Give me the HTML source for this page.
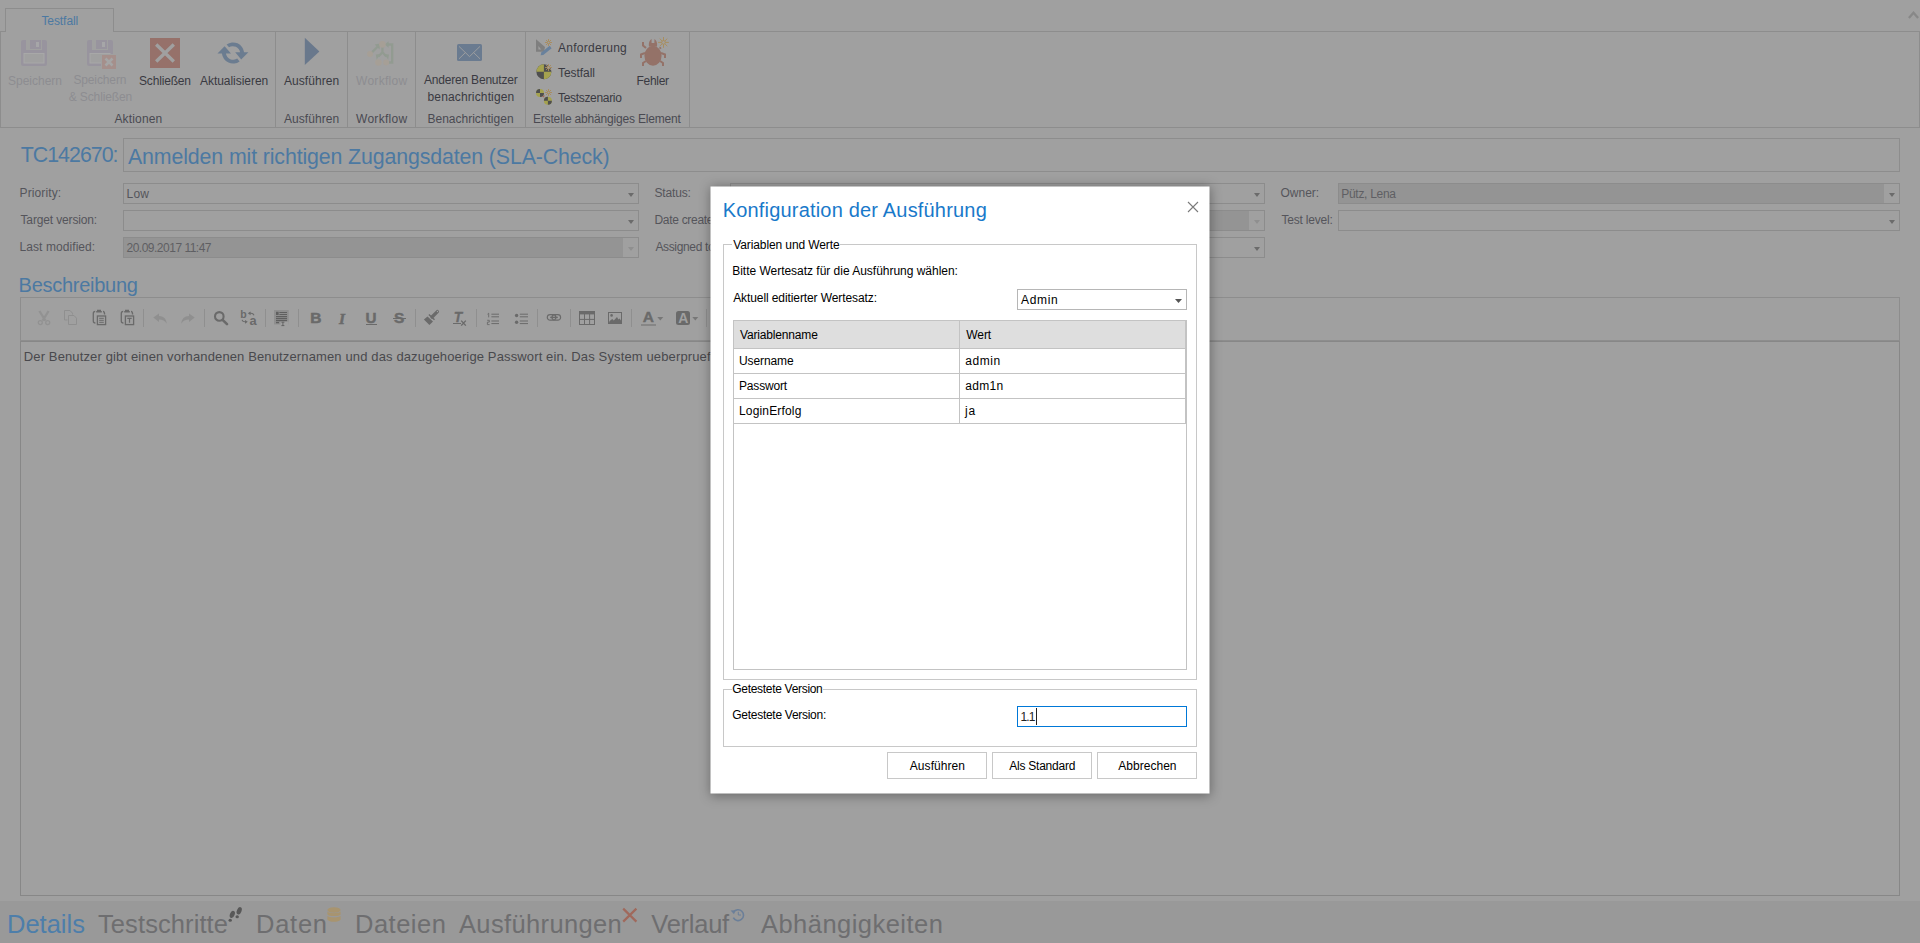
<!DOCTYPE html>
<html lang="de"><head><meta charset="utf-8"><title>Testfall TC142670</title>
<style>
html,body{margin:0;padding:0}
body{width:1920px;height:943px;overflow:hidden;position:relative;background:#a0a0a0;font-family:"Liberation Sans",sans-serif}
.t{position:absolute;white-space:nowrap}
.a{position:absolute;box-sizing:border-box}
.bd{border:1px solid #8d8d8d}
.sep{position:absolute;top:32px;width:1px;height:95px;background:#8d8d8d}
.cb{position:absolute;box-sizing:border-box;height:21px;border:1px solid #8c8c8c}
.cb i{position:absolute;right:4px;top:9px;width:0;height:0;border-left:3.5px solid transparent;border-right:3.5px solid transparent;border-top:4px solid #6b6b6b}
.cb.ro i{border-top-color:#8f8f8f}
.cb.ro b{position:absolute;left:0;top:0;bottom:0;right:15px;background:#949494}
.ts{position:absolute;top:309px;width:1px;height:18px;background:#8f8f8f}
svg{position:absolute;overflow:visible}
#dlg{position:absolute;left:710px;top:186px;width:499px;height:607px;background:#fff;transform:translate(.5px,.5px);box-shadow:0 1.5px 11px 1px rgba(0,0,0,.34)}
.gb{position:absolute;box-sizing:border-box;border:1px solid #c8c8c8}
.lg{position:absolute;background:#fff;height:3px}
.btn{position:absolute;box-sizing:border-box;width:100px;height:27px;top:752px;border:1px solid #c8c8c8;background:#fff}
.hl{position:absolute;height:1px;background:#c3c3c3}
.vl{position:absolute;width:1px;background:#c3c3c3}
</style></head><body>
<!-- ribbon -->
<div class="a bd" style="left:0;top:31px;width:1920px;height:97px"></div>
<div class="a bd" style="left:5px;top:8px;width:109px;height:24px;border-bottom:0;background:#a0a0a0"></div>
<div class="sep" style="left:275px"></div><div class="sep" style="left:347px"></div><div class="sep" style="left:415px"></div><div class="sep" style="left:525px"></div><div class="sep" style="left:689px"></div>
<svg style="left:1908px;top:10px" width="11" height="10" viewBox="0 0 11 10"><path d="M0.9 8 L5.5 2.8 L10.1 8" fill="none" stroke="#888" stroke-width="2.3"/></svg>
<!-- save (disabled) -->
<svg style="left:21px;top:40px" width="26" height="26" viewBox="0 0 26 26"><rect x="0" y="0" width="26" height="26" rx="2" fill="#98949e"/><rect x="5" y="0" width="16" height="10" fill="#a0a0a0"/><rect x="9" y="0" width="11" height="9" fill="#98949e"/><rect x="15" y="2" width="3" height="5" fill="#a6a6a8"/><rect x="3" y="13.5" width="20" height="9.5" fill="#a0a0a0" stroke="#a8a8a8" stroke-width="1"/></svg>
<!-- save & close (disabled) -->
<svg style="left:87px;top:40px" width="30" height="30" viewBox="0 0 30 30"><rect x="0" y="0" width="26" height="26" rx="2" fill="#98949e"/><rect x="5" y="0" width="16" height="10" fill="#a0a0a0"/><rect x="9" y="0" width="11" height="9" fill="#98949e"/><rect x="15" y="2" width="3" height="5" fill="#a6a6a8"/><rect x="3" y="13.5" width="20" height="9.5" fill="#a0a0a0" stroke="#a8a8a8" stroke-width="1"/><rect x="14" y="14" width="16" height="16" fill="#a0a0a0"/><rect x="15" y="15" width="14" height="14" fill="#a58f8b"/><path d="M18.5 18.5 L25.5 25.5 M25.5 18.5 L18.5 25.5" stroke="#a5a5a5" stroke-width="2.6"/></svg>
<!-- close -->
<svg style="left:150px;top:38px" width="30" height="30" viewBox="0 0 30 30"><rect width="30" height="30" fill="#96716a"/><path d="M6.2 6.5 L23.8 23.5 M23.8 6.5 L6.2 23.5" stroke="#a0a0a0" stroke-width="3.4"/></svg>
<!-- refresh -->
<svg style="left:217px;top:41px" width="32" height="24" viewBox="0 0 32 24"><g fill="#6b7c90"><path d="M7.6 5.2 L0.5 12.6 L4.9 12.6 A11.2 11.2 0 0 0 22.6 20.4 L20.2 17.6 A7.4 7.4 0 0 1 8.9 12.6 L14 12.6 Z"/><path d="M24.2 18.4 L31.4 11.2 L27.1 11.2 A11.2 11.2 0 0 0 9.6 3.4 L12 6.2 A7.4 7.4 0 0 1 23.1 11.2 L18.2 11.2 Z"/></g></svg>
<!-- play -->
<svg style="left:304px;top:37px" width="16" height="29" viewBox="0 0 16 29"><path d="M0.8 0.8 L15.4 14.4 L0.8 28 Z" fill="#69788c"/></svg>
<!-- workflow (disabled) -->
<svg style="left:366px;top:40px" width="29" height="27" viewBox="0 0 29 27"><g fill="none" stroke="#929b91" stroke-width="2.3"><path d="M6 12.4 L11.6 6.8"/><path d="M16.4 7 V12.6 M16.4 12.2 L12.4 16.6 M16.4 12.2 L20.4 16.6"/><path d="M22.500 22.500 H26.200 V4.500 H22"/></g><g fill="#929b91"><path d="M14.200 3.600 L13.600 9.400 L8.800 4.600 Z"/><path d="M22.600 1.200 V7.800 L18.800 4.500 Z"/><path d="M9.800 14.600 L14.600 14 L10.600 19.800 Z"/><path d="M23 14.600 L18.200 14 L22.200 19.800 Z"/></g><g fill="#a69f96"><circle cx="16.400" cy="4.400" r="3.300"/><circle cx="4" cy="14" r="3"/><circle cx="12.400" cy="22.500" r="3.300"/><circle cx="20.200" cy="22.500" r="3"/></g></svg>
<!-- mail -->
<svg style="left:457px;top:44px" width="25" height="17" viewBox="0 0 25 17"><rect width="25" height="17" rx="1.6" fill="#6a7b90"/><path d="M2 2.4 L12.5 12.6 L23 2.4 M2 14.8 L8.4 8.6 M23 14.8 L16.6 8.6" fill="none" stroke="#a0a0a0" stroke-width="0.9"/></svg>
<!-- anforderung -->
<svg style="left:535px;top:38px" width="18" height="18" viewBox="0 0 18 18"><path d="M1 1.2 V13.8 H9 L10 9 Z M3.4 8 L6.2 11.6 H3.4 Z" fill="#7f7f7f" fill-rule="evenodd"/><path d="M6.3 14.6 L14.6 7.8 L16.6 10.2 L8.3 17 L5.6 17.2 Z" fill="#69819c"/><g stroke="#a98b5a" stroke-width="0.9" fill="none"><path d="M13.5 1 V8 M10 4.5 H17 M11 2 L16 7 M16 2 L11 7"/><circle cx="13.5" cy="4.5" r="1.3" fill="#a0a0a0"/></g></svg>
<!-- testfall -->
<svg style="left:535px;top:63px" width="18" height="18" viewBox="0 0 18 18"><circle cx="8.9" cy="8.8" r="7.5" fill="#4f4f4f"/><path d="M8.9 8.8 V1.3 A7.5 7.5 0 0 0 1.4 8.8 Z M8.9 8.8 V16.3 A7.5 7.5 0 0 0 16.4 8.8 Z" fill="#a5a24f"/><g stroke="#a98b5a" stroke-width="0.9" fill="none"><path d="M13.5 1 V8 M10 4.5 H17 M11 2 L16 7 M16 2 L11 7"/><circle cx="13.5" cy="4.5" r="1.3" fill="#a0a0a0"/></g></svg>
<!-- testszenario -->
<svg style="left:535px;top:88px" width="18" height="18" viewBox="0 0 18 18"><circle cx="5" cy="4.9" r="4" fill="#a5a24f"/><path d="M5 4.9 V0.9 A4 4 0 0 0 1 4.9 Z M5 4.9 V8.9 A4 4 0 0 0 9 4.9 Z" fill="#4f4f4f"/><circle cx="12.9" cy="12.8" r="4" fill="#a5a24f"/><path d="M12.9 12.8 V8.8 A4 4 0 0 0 8.9 12.8 Z M12.9 12.8 V16.8 A4 4 0 0 0 16.9 12.8 Z" fill="#4f4f4f"/><path d="M7 8.6 L9.6 7 L9 9.6 Z" fill="#a0655a"/><g stroke="#a98b5a" stroke-width="0.9" fill="none"><path d="M13.5 1 V8 M10 4.5 H17 M11 2 L16 7 M16 2 L11 7"/><circle cx="13.5" cy="4.5" r="1.3" fill="#a0a0a0"/></g></svg>
<!-- bug -->
<svg style="left:639px;top:36px" width="32" height="32" viewBox="0 0 32 32"><g fill="#947268"><ellipse cx="14" cy="19.8" rx="8.6" ry="10"/><path d="M10 10.5 C9.4 6.5 11 3.8 12.6 3 V7 H15.4 V3 C17 3.800 18.600 6.500 18 10.500 Z"/></g><g fill="none" stroke="#947268" stroke-width="2"><path d="M7 12 L4 9.500 V6"/><path d="M20.5 12.5 L22 11.500"/><path d="M6 17 L2 18.500 V22"/><path d="M22 17 L26 18.500 V22"/><path d="M7 25 L4 27 V30"/><path d="M21 25 L24 27 V30"/></g><g stroke="#a98c58" stroke-width="0.9" fill="none"><path d="M24.500 1 V11.800 M19.100 6.400 H29.900 M20.700 2.600 L28.300 10.200 M28.300 2.600 L20.700 10.200"/><circle cx="24.500" cy="6.400" r="1.800" fill="#a0a0a0"/></g></svg>

<!-- form -->
<div class="a bd" style="left:123px;top:138px;width:1777px;height:34px"></div>
<div class="cb" style="left:123px;top:183px;width:516px"><i></i></div>
<div class="cb" style="left:123px;top:210px;width:516px"><i></i></div>
<div class="cb ro" style="left:123px;top:237px;width:516px"><b></b><i></i></div>
<div class="cb" style="left:730px;top:183px;width:535px"><i></i></div>
<div class="cb ro" style="left:730px;top:210px;width:535px"><b></b><i></i></div>
<div class="cb" style="left:730px;top:237px;width:535px"><i></i></div>
<div class="cb ro" style="left:1338px;top:183px;width:562px"><b></b><i style="border-top-color:#6b6b6b"></i></div>
<div class="cb" style="left:1338px;top:210px;width:562px"><i></i></div>
<!-- editor -->
<div class="a bd" style="left:20px;top:297px;width:1880px;height:44px"></div>
<div class="a" style="left:20px;top:341px;width:1880px;height:555px;border:1px solid #878787"></div>
<div class="ts" style="left:143px"></div><div class="ts" style="left:204px"></div><div class="ts" style="left:265px"></div><div class="ts" style="left:298px"></div><div class="ts" style="left:415px"></div><div class="ts" style="left:476px"></div><div class="ts" style="left:537px"></div><div class="ts" style="left:570px"></div><div class="ts" style="left:631px"></div><div class="ts" style="left:706px"></div>
<!-- cut -->
<svg style="left:37px;top:310px" width="14" height="16" viewBox="0 0 14 16"><g fill="none" stroke="#929292"><path d="M2.4 1 L8.4 10.6 M11.600 1 L5.600 10.600" stroke-width="2.3"/><circle cx="3.300" cy="12.600" r="2" stroke-width="1.300"/><circle cx="10.700" cy="12.600" r="2" stroke-width="1.300"/></g></svg>
<!-- copy -->
<svg style="left:64px;top:310px" width="14" height="16" viewBox="0 0 14 16"><g fill="none" stroke="#8f8f8f" stroke-width="1"><path d="M3.500 10 H0.500 V0.500 H6 L8.500 3.200 V4.500"/><path d="M4.500 5.500 H10 L12.500 8.200 V14.500 H4.500 Z" fill="#a0a0a0"/></g></svg>
<!-- paste -->
<svg style="left:92px;top:309px" width="15" height="17" viewBox="0 0 15 17"><g fill="none" stroke="#6a6a6a"><path d="M3.200 2.300 C1.500 2.300 1.300 3 1.300 4.500 V12 C1.300 13.700 1.800 14 3.400 14" stroke-width="1.300"/><path d="M11 2.300 C12.300 2.300 12.600 3 12.600 5.500" stroke-width="1.300"/><path d="M4.200 2.700 H9.800 M5 1.400 H9" stroke-width="1.500"/><rect x="5.400" y="7" width="8.200" height="8.600" stroke-width="1.300"/><path d="M7.200 9.300 H11.800 M7.200 11.300 H11.800 M7.200 13.300 H11.800" stroke-width="1"/></g></svg>
<!-- paste text -->
<svg style="left:120px;top:309px" width="15" height="17" viewBox="0 0 15 17"><g fill="none" stroke="#6a6a6a"><path d="M3.200 2.300 C1.500 2.300 1.300 3 1.300 4.500 V12 C1.300 13.700 1.800 14 3.400 14" stroke-width="1.300"/><path d="M11 2.300 C12.300 2.300 12.600 3 12.600 5.500" stroke-width="1.300"/><path d="M4.200 2.700 H9.800 M5 1.400 H9" stroke-width="1.500"/><rect x="5.400" y="7" width="8.200" height="8.600" stroke-width="1.300"/><path d="M7.300 9.300 H11.700 M9.500 9.300 V13.800" stroke-width="1.200"/></g></svg>
<!-- undo / redo -->
<svg style="left:153px;top:313px" width="14" height="12" viewBox="0 0 14 12"><path d="M0.300 4.600 L6 0.600 V3 C10.500 3 13.500 6 13.700 10.800 C12 7.800 9.500 6.600 6 6.600 V9 Z" fill="#8f8f8f"/></svg>
<svg style="left:181px;top:313px" width="14" height="12" viewBox="0 0 14 12"><path d="M13.700 4.600 L8 0.600 V3 C3.500 3 0.500 6 0.300 10.800 C2 7.800 4.500 6.600 8 6.600 V9 Z" fill="#8f8f8f"/></svg>
<!-- search -->
<svg style="left:213px;top:310px" width="16" height="16" viewBox="0 0 16 16"><circle cx="6.300" cy="6.400" r="4.300" fill="none" stroke="#6a6a6a" stroke-width="2.100"/><path d="M9.600 9.800 L14 14.200" stroke="#6a6a6a" stroke-width="2.600" stroke-linecap="round"/></svg>
<!-- replace -->
<span class="t" style="left:240.3px;top:308.4px;font-size:10.5px;line-height:12px;font-weight:bold;color:#6a6a6a">b</span>
<span class="t" style="left:249.6px;top:313.4px;font-size:12.8px;line-height:16px;font-weight:bold;color:#6a6a6a">a</span>
<svg style="left:240px;top:310px" width="17" height="16" viewBox="0 0 17 16"><g fill="none" stroke="#6a6a6a" stroke-width="1.100"><path d="M9 3.300 H11 C12.500 3.300 13.500 4 14 5.200"/><path d="M2 9.800 C2.500 11.400 3.500 11.800 5 11.800 H6"/></g><path d="M10.600 1.400 L7.800 3.300 L10.600 5.200 Z M5 9.900 L7.800 11.800 L5 13.700 Z" fill="#6a6a6a"/></svg>
<!-- select all -->
<svg style="left:274px;top:310px" width="15" height="16" viewBox="0 0 15 16"><rect x="0" y="0" width="14.700" height="14.500" fill="#8f8f8f"/><g stroke="#5f5f5f" stroke-width="1.100"><path d="M5.400 2.500 H13 M5.400 4.500 H13 M2 6.600 H13 M2 8.600 H13 M2 10.600 H13 M2 12.600 H5"/></g><rect x="2" y="1.800" width="2.600" height="3.200" fill="#5f5f5f"/><rect x="6.400" y="11.600" width="8.300" height="4.400" fill="#a0a0a0"/><path d="M7.400 12.200 H10.400 M7.400 15.600 H10.400 M8.900 12.200 V15.600" stroke="#5f5f5f" stroke-width="0.900" fill="none"/></svg>
<!-- B I U S -->
<span class="t" style="left:310.3px;top:307px;font-size:15.5px;line-height:22px;font-weight:bold;-webkit-text-stroke:0.55px #6a6a6a;color:#6a6a6a">B</span>
<span class="t" style="left:339px;top:307.5px;font-size:15.4px;line-height:22px;font-weight:bold;font-style:italic;font-family:'Liberation Serif',serif;-webkit-text-stroke:0.5px #6a6a6a;color:#6a6a6a">I</span>
<span class="t" style="left:365.600px;top:307px;font-size:15.200px;line-height:22px;font-weight:bold;-webkit-text-stroke:0.45px #6a6a6a;color:#6a6a6a">U</span>
<div class="a" style="left:366px;top:324px;width:11px;height:1px;background:#6a6a6a"></div>
<span class="t" style="left:394px;top:307px;font-size:15.500px;line-height:22px;font-weight:bold;-webkit-text-stroke:0.45px #6a6a6a;color:#6a6a6a">S</span>
<div class="a" style="left:393px;top:317.500px;width:13px;height:1.200px;background:#6a6a6a"></div>
<!-- brush -->
<svg style="left:424px;top:309px" width="16" height="17" viewBox="0 0 16 17"><path d="M13.400 2.600 L8 8" stroke="#6a6a6a" stroke-width="3.300" stroke-linecap="round" fill="none"/><path d="M5.400 4.900 L11 10.200 L10 11.200 L4.400 5.900 Z M-0.100 10.500 L3.500 7.400 L9 12.600 L5.400 16 Z" fill="#6a6a6a"/><circle cx="13.500" cy="2.500" r="0.700" fill="#a0a0a0"/></svg>
<!-- Tx -->
<span class="t" style="left:453.7px;top:306.600px;font-size:13.800px;line-height:22px;font-weight:bold;font-style:italic;-webkit-text-stroke:0.3px #6a6a6a;color:#6a6a6a">T</span>
<div class="a" style="left:453px;top:323px;width:8px;height:1px;background:#6a6a6a"></div>
<svg style="left:460px;top:320px" width="7" height="7" viewBox="0 0 7 7"><path d="M1.200 0.600 L5.800 5.600 M5.800 0.600 L1.200 5.600" stroke="#6a6a6a" stroke-width="1.400"/></svg>
<!-- ol -->
<svg style="left:486px;top:312px" width="14" height="14" viewBox="0 0 14 14"><g fill="none" stroke="#6a6a6a" stroke-width="1"><path d="M5.400 2.200 H13 M5.400 4.800 H13 M5.400 9 H13 M5.400 11.600 H13"/><path d="M1.500 2.200 L2.700 1.200 V5.400" stroke-width="0.900"/><path d="M1.200 8.300 H3.300 V10.100 H1.400 V12.600 H3.600" stroke-width="0.900"/></g></svg>
<!-- ul -->
<svg style="left:514px;top:312px" width="14" height="14" viewBox="0 0 14 14"><g fill="none" stroke="#6a6a6a" stroke-width="1"><path d="M5.800 2.200 H14 M5.800 4.800 H14 M5.800 9 H14 M5.800 11.600 H14"/></g><circle cx="2.600" cy="3.500" r="1.700" fill="#6a6a6a"/><circle cx="2.600" cy="10.300" r="1.700" fill="#6a6a6a"/></svg>
<!-- link -->
<svg style="left:546px;top:313px" width="16" height="10" viewBox="0 0 16 10"><g fill="none" stroke="#6a6a6a" stroke-width="1.200"><rect x="1.300" y="1.600" width="8.600" height="5.600" rx="2.800"/><rect x="6" y="1.600" width="8.600" height="5.600" rx="2.800"/></g><path d="M4.200 4.400 H11.800" stroke="#6a6a6a" stroke-width="1.400"/></svg>
<!-- table -->
<svg style="left:579px;top:311px" width="16" height="14" viewBox="0 0 16 14"><rect x="0" y="0" width="16" height="3.400" fill="#6a6a6a"/><g fill="none" stroke="#6a6a6a" stroke-width="1"><rect x="0.500" y="0.500" width="15" height="13"/><path d="M5.500 3 V13.500 M10.600 3 V13.500 M0.500 8.400 H15.500"/></g></svg>
<!-- image -->
<svg style="left:608px;top:312px" width="14" height="12" viewBox="0 0 14 12"><rect x="0.500" y="0.500" width="13" height="11" fill="none" stroke="#6a6a6a" stroke-width="1"/><circle cx="3.600" cy="3.400" r="1.300" fill="#6a6a6a"/><path d="M1 10.800 L1.600 9 L4.300 7 L5.800 8.400 L9 5 L10.400 7.400 L11.600 6.400 L13 8.600 V11 H1 Z" fill="#6a6a6a"/></svg>
<!-- text colour -->
<span class="t" style="left:642.800px;top:306px;font-size:15.500px;line-height:22px;font-weight:bold;-webkit-text-stroke:0.4px #6a6a6a;color:#6a6a6a">A</span>
<div class="a" style="left:641px;top:324px;width:15px;height:2px;background:#868686"></div>
<svg style="left:657px;top:317px" width="7" height="4" viewBox="0 0 7 4"><path d="M0.300 0 H6.300 L3.300 3.600 Z" fill="#777"/></svg>
<!-- bg colour -->
<div class="a" style="left:676px;top:311px;width:14px;height:14px;border-radius:2.500px;background:#6a6a6a"></div>
<span class="t" style="left:678.200px;top:308px;font-size:14px;line-height:20px;font-weight:bold;color:#a0a0a0">A</span>
<svg style="left:692px;top:317px" width="7" height="4" viewBox="0 0 7 4"><path d="M0.300 0 H6.300 L3.300 3.600 Z" fill="#777"/></svg>

<!-- bottom tabs -->
<div class="a" style="left:0;top:901px;width:1920px;height:42px;background:#999"></div>
<!-- footsteps -->
<svg style="left:228px;top:906px" width="15" height="17" viewBox="0 0 15 17"><g fill="#585858"><ellipse cx="4.300" cy="8.400" rx="2.300" ry="3.800" transform="rotate(22 4.300 8.400)"/><ellipse cx="2.200" cy="14.300" rx="1.700" ry="1.500"/><ellipse cx="11.200" cy="4.800" rx="2.300" ry="3.800" transform="rotate(22 11.200 4.800)"/><ellipse cx="9.200" cy="10.800" rx="1.700" ry="1.500"/></g></svg>
<!-- database -->
<svg style="left:327px;top:907px" width="14" height="16" viewBox="0 0 14 16"><g fill="#a8946f"><ellipse cx="7" cy="3" rx="6.600" ry="2.800"/><path d="M0.400 4.600 C2 6.800 12 6.800 13.600 4.600 V7.400 C12 9.600 2 9.600 0.400 7.400 Z"/><path d="M0.400 8.800 C2 11 12 11 13.600 8.800 V12.400 C12 15.600 2 15.600 0.400 12.400 Z"/></g></svg>
<!-- red x -->
<svg style="left:622px;top:907px" width="16" height="16" viewBox="0 0 16 16"><path d="M1.200 1.600 L14.400 14.600 M14.400 1.600 L1.200 14.600" stroke="#a0695c" stroke-width="2.200" fill="none"/></svg>
<!-- history -->
<svg style="left:730px;top:908px" width="15" height="14" viewBox="0 0 15 14"><g fill="none" stroke="#6b7f99" stroke-width="1.600"><path d="M3.600 4.200 A5.400 5.400 0 1 1 3.300 9.600"/><path d="M8.300 3.800 V7 H11" stroke-width="1"/></g><path d="M0.600 2.600 L5.400 2.200 L4 6.200 Z" fill="#6b7f99"/></svg>

<span class="t" style="left:41.40px;top:12.00px;color:#4c79a2;font-size:12px;line-height:18px;font-family:'Liberation Sans',sans-serif;letter-spacing:-0.071px;">Testfall</span>
<span class="t" style="left:8.00px;top:72.00px;color:#8d8d91;font-size:12px;line-height:18px;font-family:'Liberation Sans',sans-serif;letter-spacing:0.000px;">Speichern</span>
<span class="t" style="left:73.40px;top:71.00px;color:#8d8d91;font-size:12px;line-height:18px;font-family:'Liberation Sans',sans-serif;letter-spacing:-0.125px;">Speichern</span>
<span class="t" style="left:68.80px;top:88.00px;color:#8d8d91;font-size:12px;line-height:18px;font-family:'Liberation Sans',sans-serif;letter-spacing:-0.130px;">&amp; Schließen</span>
<span class="t" style="left:139.00px;top:72.00px;color:#3a3a42;font-size:12px;line-height:18px;font-family:'Liberation Sans',sans-serif;letter-spacing:-0.175px;">Schließen</span>
<span class="t" style="left:200.00px;top:72.00px;color:#3a3a42;font-size:12px;line-height:18px;font-family:'Liberation Sans',sans-serif;letter-spacing:-0.042px;">Aktualisieren</span>
<span class="t" style="left:284.00px;top:72.00px;color:#3a3a42;font-size:12px;line-height:18px;font-family:'Liberation Sans',sans-serif;letter-spacing:0.062px;">Ausführen</span>
<span class="t" style="left:356.00px;top:72.00px;color:#8d8d91;font-size:12px;line-height:18px;font-family:'Liberation Sans',sans-serif;letter-spacing:0.286px;">Workflow</span>
<span class="t" style="left:424.00px;top:71.00px;color:#3a3a42;font-size:12px;line-height:18px;font-family:'Liberation Sans',sans-serif;letter-spacing:-0.200px;">Anderen Benutzer</span>
<span class="t" style="left:427.50px;top:88.00px;color:#3a3a42;font-size:12px;line-height:18px;font-family:'Liberation Sans',sans-serif;letter-spacing:0.143px;">benachrichtigen</span>
<span class="t" style="left:558.00px;top:39.00px;color:#3a3a42;font-size:12px;line-height:18px;font-family:'Liberation Sans',sans-serif;letter-spacing:0.270px;">Anforderung</span>
<span class="t" style="left:558.00px;top:64.00px;color:#3a3a42;font-size:12px;line-height:18px;font-family:'Liberation Sans',sans-serif;letter-spacing:-0.057px;">Testfall</span>
<span class="t" style="left:558.00px;top:89.00px;color:#3a3a42;font-size:12px;line-height:18px;font-family:'Liberation Sans',sans-serif;letter-spacing:-0.318px;">Testszenario</span>
<span class="t" style="left:636.60px;top:72.00px;color:#3a3a42;font-size:12px;line-height:18px;font-family:'Liberation Sans',sans-serif;letter-spacing:-0.320px;">Fehler</span>
<span class="t" style="left:114.40px;top:110.00px;color:#4a4a52;font-size:12px;line-height:18px;font-family:'Liberation Sans',sans-serif;letter-spacing:0.171px;">Aktionen</span>
<span class="t" style="left:284.00px;top:110.00px;color:#4a4a52;font-size:12px;line-height:18px;font-family:'Liberation Sans',sans-serif;letter-spacing:0.062px;">Ausführen</span>
<span class="t" style="left:356.00px;top:110.00px;color:#4a4a52;font-size:12px;line-height:18px;font-family:'Liberation Sans',sans-serif;letter-spacing:0.286px;">Workflow</span>
<span class="t" style="left:427.50px;top:110.00px;color:#4a4a52;font-size:12px;line-height:18px;font-family:'Liberation Sans',sans-serif;letter-spacing:0.000px;">Benachrichtigen</span>
<span class="t" style="left:533.00px;top:110.00px;color:#4a4a52;font-size:12px;line-height:18px;font-family:'Liberation Sans',sans-serif;letter-spacing:-0.192px;">Erstelle abhängiges Element</span>
<span class="t" style="left:20.70px;top:139.00px;color:#4c79a2;font-size:21.33px;line-height:32px;font-family:'Liberation Sans',sans-serif;letter-spacing:-0.963px;">TC142670:</span>
<span class="t" style="left:128.00px;top:141.00px;color:#4c79a2;font-size:21.33px;line-height:32px;font-family:'Liberation Sans',sans-serif;letter-spacing:-0.120px;">Anmelden mit richtigen Zugangsdaten (SLA-Check)</span>
<span class="t" style="left:19.50px;top:184.00px;color:#55555b;font-size:12px;line-height:18px;font-family:'Liberation Sans',sans-serif;letter-spacing:0.125px;">Priority:</span>
<span class="t" style="left:20.50px;top:211.00px;color:#55555b;font-size:12px;line-height:18px;font-family:'Liberation Sans',sans-serif;letter-spacing:-0.143px;">Target version:</span>
<span class="t" style="left:19.50px;top:238.00px;color:#55555b;font-size:12px;line-height:18px;font-family:'Liberation Sans',sans-serif;letter-spacing:0.077px;">Last modified:</span>
<span class="t" style="left:126.50px;top:185.00px;color:#55555b;font-size:12px;line-height:18px;font-family:'Liberation Sans',sans-serif;letter-spacing:0.250px;">Low</span>
<span class="t" style="left:126.50px;top:239.00px;color:#5f5f63;font-size:12px;line-height:18px;font-family:'Liberation Sans',sans-serif;letter-spacing:-0.500px;">20.09.2017 11:47</span>
<span class="t" style="left:654.40px;top:184.00px;color:#55555b;font-size:12px;line-height:18px;font-family:'Liberation Sans',sans-serif;letter-spacing:-0.133px;">Status:</span>
<span class="t" style="left:654.40px;top:211.00px;color:#55555b;font-size:12px;line-height:18px;font-family:'Liberation Sans',sans-serif;letter-spacing:-0.289px;">Date created:</span>
<span class="t" style="left:655.40px;top:238.00px;color:#55555b;font-size:12px;line-height:18px;font-family:'Liberation Sans',sans-serif;letter-spacing:-0.343px;">Assigned to:</span>
<span class="t" style="left:1280.50px;top:184.00px;color:#55555b;font-size:12px;line-height:18px;font-family:'Liberation Sans',sans-serif;letter-spacing:0.000px;">Owner:</span>
<span class="t" style="left:1281.50px;top:211.00px;color:#55555b;font-size:12px;line-height:18px;font-family:'Liberation Sans',sans-serif;letter-spacing:-0.200px;">Test level:</span>
<span class="t" style="left:1341.30px;top:185.00px;color:#5f5f63;font-size:12px;line-height:18px;font-family:'Liberation Sans',sans-serif;letter-spacing:-0.300px;">Pütz, Lena</span>
<span class="t" style="left:18.60px;top:270.00px;color:#4c79a2;font-size:20px;line-height:30px;font-family:'Liberation Sans',sans-serif;letter-spacing:-0.273px;">Beschreibung</span>
<span class="t" style="left:23.75px;top:347.00px;color:#49494d;font-size:13px;line-height:20px;font-family:'Liberation Sans',sans-serif;letter-spacing:0.132px;">Der Benutzer gibt einen vorhandenen Benutzernamen und das dazugehoerige Passwort ein. Das System ueberprueft die Zugangsdaten und meldet den Benutzer an.</span>
<span class="t" style="left:7.00px;top:905.00px;color:#4d7eaa;font-size:25.5px;line-height:38px;font-family:'Liberation Sans',sans-serif;letter-spacing:0.000px;">Details</span>
<span class="t" style="left:98.00px;top:905.00px;color:#6e6e70;font-size:25.5px;line-height:38px;font-family:'Liberation Sans',sans-serif;letter-spacing:0.091px;">Testschritte</span>
<span class="t" style="left:256.00px;top:905.00px;color:#6e6e70;font-size:25.5px;line-height:38px;font-family:'Liberation Sans',sans-serif;letter-spacing:0.750px;">Daten</span>
<span class="t" style="left:355.00px;top:905.00px;color:#6e6e70;font-size:25.5px;line-height:38px;font-family:'Liberation Sans',sans-serif;letter-spacing:0.500px;">Dateien</span>
<span class="t" style="left:459.00px;top:905.00px;color:#6e6e70;font-size:25.5px;line-height:38px;font-family:'Liberation Sans',sans-serif;letter-spacing:0.364px;">Ausführungen</span>
<span class="t" style="left:651.30px;top:905.00px;color:#6e6e70;font-size:25.5px;line-height:38px;font-family:'Liberation Sans',sans-serif;letter-spacing:-0.250px;">Verlauf</span>
<span class="t" style="left:761.00px;top:905.00px;color:#6e6e70;font-size:25.5px;line-height:38px;font-family:'Liberation Sans',sans-serif;letter-spacing:0.462px;">Abhängigkeiten</span>
<!-- dialog -->
<div id="dlg"></div>
<svg style="left:1187px;top:201px" width="12" height="12" viewBox="0 0 12 12"><path d="M1 1 L11 11 M11 1 L1 11" stroke="#7a7a7a" stroke-width="1.1" fill="none"/></svg>
<div class="gb" style="left:723px;top:244px;width:474px;height:436px"></div>
<div class="lg" style="left:732px;top:243px;width:108px"></div>
<div class="gb" style="left:723px;top:689px;width:474px;height:58px"></div>
<div class="lg" style="left:732px;top:688px;width:91px"></div>
<div class="a" style="left:1017px;top:289px;width:170px;height:21px;border:1px solid #b6b6b6;background:#fff"></div>
<svg style="left:1175px;top:299px" width="7" height="4" viewBox="0 0 7 4"><path d="M0 0 H7 L3.5 4 Z" fill="#555"/></svg>
<div class="a" style="left:733px;top:320px;width:454px;height:350px;border:1px solid #c3c3c3;background:#fff"></div>
<div class="a" style="left:734px;top:321px;width:452px;height:27px;background:#dedede"></div>
<div class="hl" style="left:734px;top:348px;width:452px"></div>
<div class="hl" style="left:734px;top:373px;width:452px"></div>
<div class="hl" style="left:734px;top:398px;width:452px"></div>
<div class="hl" style="left:734px;top:423px;width:452px"></div>
<div class="vl" style="left:959px;top:321px;height:103px"></div>
<div class="vl" style="left:1185px;top:321px;height:103px"></div>
<div class="a" style="left:1017px;top:706px;width:170px;height:21px;border:1px solid #0078d7;background:#fff"></div>
<div class="a" style="left:1036px;top:708px;width:1px;height:17px;background:#222"></div>
<div class="btn" style="left:887px"></div><div class="btn" style="left:992px"></div><div class="btn" style="left:1097px"></div>
<span class="t" style="left:722.70px;top:195.00px;color:#1979ca;font-size:20px;line-height:30px;font-family:'Liberation Sans',sans-serif;letter-spacing:0.185px;">Konfiguration der Ausführung</span>
<span class="t" style="left:733.20px;top:236.00px;color:#000;font-size:12px;line-height:18px;font-family:'Liberation Sans',sans-serif;letter-spacing:-0.100px;">Variablen und Werte</span>
<span class="t" style="left:732.20px;top:262.00px;color:#000;font-size:12px;line-height:18px;font-family:'Liberation Sans',sans-serif;letter-spacing:-0.020px;">Bitte Wertesatz für die Ausführung wählen:</span>
<span class="t" style="left:733.20px;top:289.00px;color:#000;font-size:12px;line-height:18px;font-family:'Liberation Sans',sans-serif;letter-spacing:-0.096px;">Aktuell editierter Wertesatz:</span>
<span class="t" style="left:1021.00px;top:291.00px;color:#000;font-size:12px;line-height:18px;font-family:'Liberation Sans',sans-serif;letter-spacing:0.675px;">Admin</span>
<span class="t" style="left:740.00px;top:326.00px;color:#000;font-size:12px;line-height:18px;font-family:'Liberation Sans',sans-serif;letter-spacing:-0.167px;">Variablenname</span>
<span class="t" style="left:966.30px;top:326.00px;color:#000;font-size:12px;line-height:18px;font-family:'Liberation Sans',sans-serif;letter-spacing:-0.100px;">Wert</span>
<span class="t" style="left:739.00px;top:352.00px;color:#000;font-size:12px;line-height:18px;font-family:'Liberation Sans',sans-serif;letter-spacing:-0.114px;">Username</span>
<span class="t" style="left:739.00px;top:377.00px;color:#000;font-size:12px;line-height:18px;font-family:'Liberation Sans',sans-serif;letter-spacing:-0.171px;">Passwort</span>
<span class="t" style="left:739.00px;top:402.00px;color:#000;font-size:12px;line-height:18px;font-family:'Liberation Sans',sans-serif;letter-spacing:0.160px;">LoginErfolg</span>
<span class="t" style="left:965.30px;top:352.00px;color:#000;font-size:12px;line-height:18px;font-family:'Liberation Sans',sans-serif;letter-spacing:0.550px;">admin</span>
<span class="t" style="left:965.30px;top:377.00px;color:#000;font-size:12px;line-height:18px;font-family:'Liberation Sans',sans-serif;letter-spacing:0.275px;">adm1n</span>
<span class="t" style="left:965.00px;top:402.00px;color:#000;font-size:12px;line-height:18px;font-family:'Liberation Sans',sans-serif;letter-spacing:0.800px;">ja</span>
<span class="t" style="left:732.30px;top:680.00px;color:#000;font-size:12px;line-height:18px;font-family:'Liberation Sans',sans-serif;letter-spacing:-0.306px;">Getestete Version</span>
<span class="t" style="left:732.30px;top:706.00px;color:#000;font-size:12px;line-height:18px;font-family:'Liberation Sans',sans-serif;letter-spacing:-0.282px;">Getestete Version:</span>
<span class="t" style="left:1020.60px;top:708.00px;color:#222;font-size:12px;line-height:18px;font-family:'Liberation Sans',sans-serif;letter-spacing:-0.950px;">1.1</span>
<span class="t" style="left:909.80px;top:757.00px;color:#000;font-size:12px;line-height:18px;font-family:'Liberation Sans',sans-serif;letter-spacing:0.062px;">Ausführen</span>
<span class="t" style="left:1009.20px;top:757.00px;color:#000;font-size:12px;line-height:18px;font-family:'Liberation Sans',sans-serif;letter-spacing:-0.227px;">Als Standard</span>
<span class="t" style="left:1118.20px;top:757.00px;color:#000;font-size:12px;line-height:18px;font-family:'Liberation Sans',sans-serif;letter-spacing:0.037px;">Abbrechen</span>
</body></html>
